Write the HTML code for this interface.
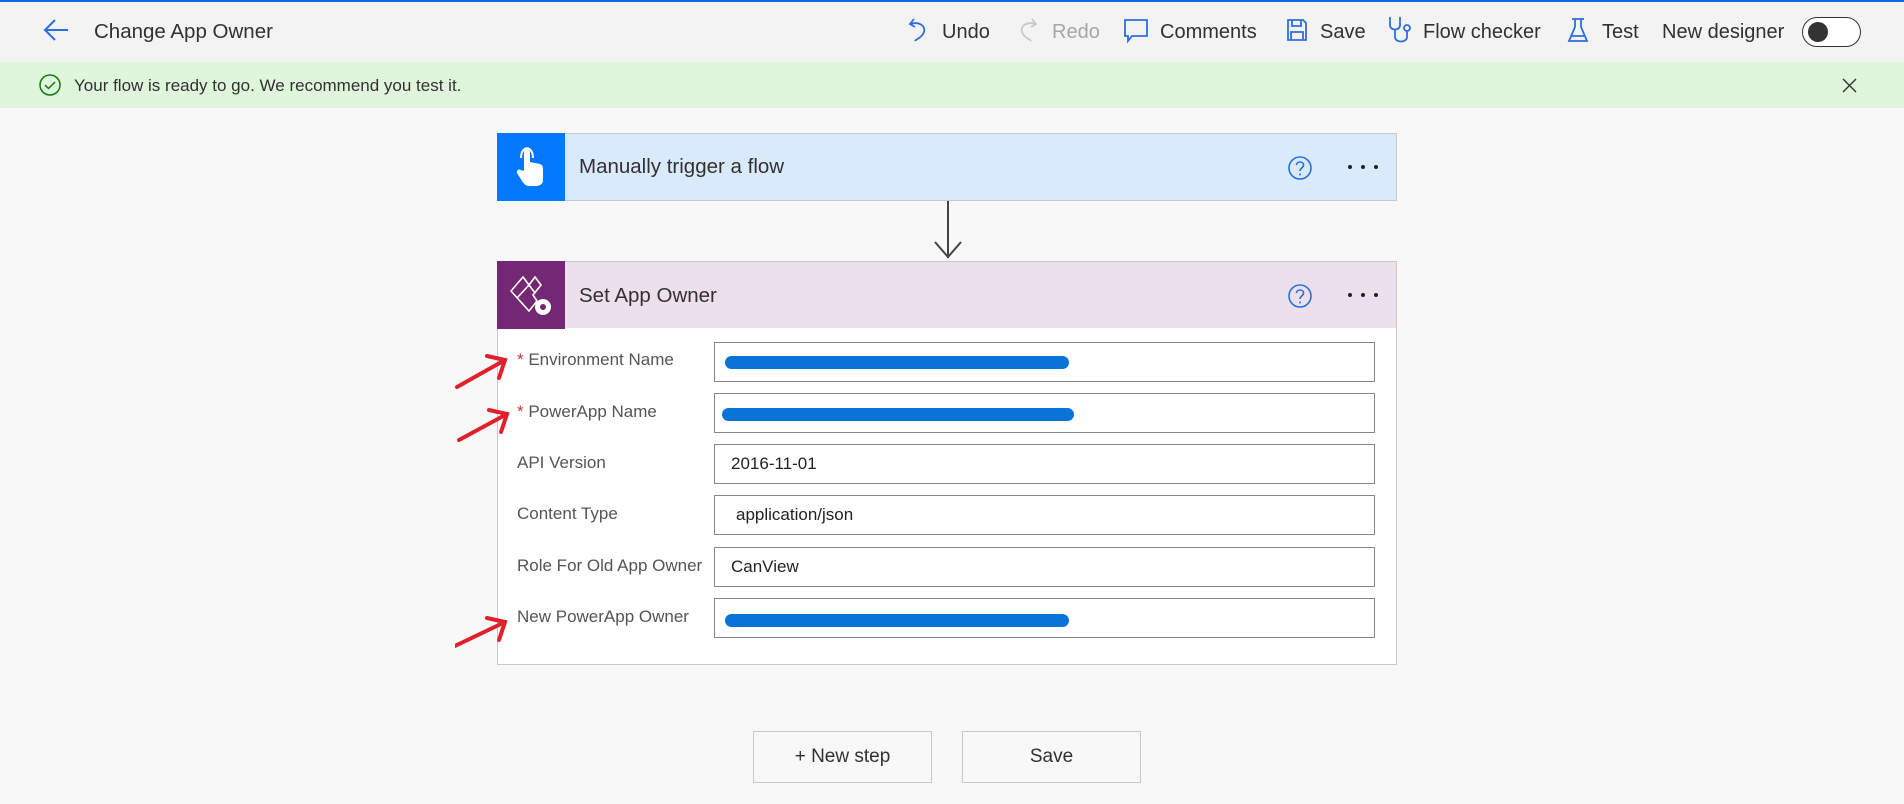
<!DOCTYPE html>
<html><head><meta charset="utf-8"><style>
*{margin:0;padding:0;box-sizing:border-box}
body{width:1904px;height:804px;background:#f8f8f8;font-family:"Liberation Sans",sans-serif;position:relative;overflow:hidden;color:#323130}
.a{position:absolute}
.hdr{left:0;top:0;width:1904px;height:62px;background:#f3f3f3;border-top:2px solid #0f6cdb}
.t{font-size:20px;white-space:nowrap}
.lbl{font-size:17px;color:#555;left:517px;white-space:nowrap}
.inp{left:714px;width:661px;height:40px;border:1px solid #8a8886;background:#fff;font-size:17px;padding:9px 0 0 16px;color:#222}
.scr{height:13px;background:#0a74d6;border-radius:7px}
.btn{top:731px;height:52px;width:179px;border:1px solid #c8c8c8;background:#f8f8f8;font-size:19px;text-align:center;line-height:50px;color:#323130}
.dots{width:32px;height:6px}
</style></head><body>
<div class="a hdr"></div>
<svg class="a" style="left:42px;top:18px" width="28" height="24" viewBox="0 0 28 24"><path d="M13 2 L3 12 L13 22 M3 12 H26" stroke="#2b6ee0" stroke-width="2" fill="none"/></svg>
<div class="a t" style="left:94px;top:20px;font-size:20.5px">Change App Owner</div>
<svg class="a" style="left:907px;top:17px" width="22" height="26" viewBox="0 0 22 26"><path d="M7 2 L3 7 L8 10 M3 7 C12 4 19 9 17 15 C15 21 9 22 8 24" stroke="#2b6ee0" stroke-width="1.8" fill="none"/></svg>
<div class="a t" style="left:942px;top:21px">Undo</div>
<svg class="a" style="left:1017px;top:17px" width="22" height="26" viewBox="0 0 22 26"><path d="M15 2 L19 7 L14 10 M19 7 C10 4 3 9 5 15 C7 21 13 22 14 24" stroke="#c8c8c8" stroke-width="1.8" fill="none"/></svg>
<div class="a t" style="left:1052px;top:21px;color:#a6a6a6">Redo</div>
<svg class="a" style="left:1123px;top:18px" width="26" height="26" viewBox="0 0 26 26"><path d="M2 2 H24 V18 H9 L5 23 V18 H2 Z" stroke="#2b6ee0" stroke-width="1.8" fill="none"/></svg>
<div class="a t" style="left:1160px;top:21px">Comments</div>
<svg class="a" style="left:1286px;top:18px" width="22" height="24" viewBox="0 0 22 24"><path d="M2 2 H17 L20 5 V22 H2 Z M6 2 V8 H15 V2 M5 22 V14 H17 V22" stroke="#2b6ee0" stroke-width="1.8" fill="none"/></svg>
<div class="a t" style="left:1320px;top:21px">Save</div>
<svg class="a" style="left:1387px;top:15px" width="26" height="30" viewBox="0 0 26 30"><path d="M3 2 V10 C3 16 13 16 13 10 V2 M8 15 V22 C8 28 20 28 20 22 V16" stroke="#2b6ee0" stroke-width="1.8" fill="none"/><circle cx="20" cy="13" r="3" stroke="#2b6ee0" stroke-width="1.8" fill="none"/></svg>
<div class="a t" style="left:1423px;top:21px">Flow checker</div>
<svg class="a" style="left:1567px;top:17px" width="22" height="28" viewBox="0 0 22 28"><path d="M5 2 H17 M8 2 V10 L2 24 H20 L14 10 V2 M4 19 H18" stroke="#2b6ee0" stroke-width="1.8" fill="none"/></svg>
<div class="a t" style="left:1602px;top:21px">Test</div>
<div class="a t" style="left:1662px;top:21px">New designer</div>
<div class="a" style="left:1802px;top:17px;width:59px;height:30px;border:1.5px solid #333;border-radius:15px;background:#fff"></div>
<div class="a" style="left:1808px;top:22px;width:20px;height:20px;border-radius:50%;background:#333"></div>
<div class="a" style="left:0;top:62px;width:1904px;height:46px;background:#dff6dd"></div>
<svg class="a" style="left:38px;top:73px" width="24" height="24" viewBox="0 0 24 24"><circle cx="12" cy="12" r="10" stroke="#107c10" stroke-width="1.5" fill="none"/><path d="M7 12 L10.5 15.5 L17 9" stroke="#107c10" stroke-width="1.5" fill="none"/></svg>
<div class="a" style="left:74px;top:76px;font-size:17px;white-space:nowrap">Your flow is ready to go. We recommend you test it.</div>
<svg class="a" style="left:1842px;top:78px" width="15" height="15" viewBox="0 0 15 15"><path d="M1 1 L14 14 M14 1 L1 14" stroke="#333" stroke-width="1.4"/></svg>

<div class="a" style="left:497px;top:133px;width:900px;height:68px;background:#d9eafd;border:1px solid #c8c8c8"></div>
<div class="a" style="left:497px;top:133px;width:68px;height:68px;background:#0078ff"></div>
<svg class="a" style="left:512px;top:146px" width="38" height="42" viewBox="0 0 38 42"><path d="M12 24 V6 C12 2 18 2 18 6 V16 L28 18 C31 19 31 22 31 24 V34 C31 38 28 40 24 40 H17 C14 40 12 38 10 35 L5 27 C4 24 8 22 10 25 Z" fill="#fff"/><path d="M9 12 C9 -1 21 -1 21 12" stroke="#fff" stroke-width="2" fill="none"/></svg>
<div class="a" style="left:579px;top:155px;font-size:20.5px">Manually trigger a flow</div>
<svg class="a" style="left:1287px;top:155px" width="26" height="26" viewBox="0 0 26 26"><circle cx="13" cy="13" r="11" stroke="#2b6ee0" stroke-width="1.6" fill="none"/><path d="M9.5 10 C9.5 6 16.5 6 16.5 10 C16.5 13 13 13 13 16" stroke="#2b6ee0" stroke-width="1.6" fill="none"/><circle cx="13" cy="19.5" r="1" fill="#2b6ee0"/></svg>
<svg class="a dots" style="left:1347px;top:164px" viewBox="0 0 32 6"><circle cx="3" cy="3" r="2" fill="#222"/><circle cx="16" cy="3" r="2" fill="#222"/><circle cx="29" cy="3" r="2" fill="#222"/></svg>

<div class="a" style="left:947px;top:201px;width:2px;height:57px;background:#444"></div>
<svg class="a" style="left:933px;top:238px" width="30" height="22" viewBox="0 0 30 22"><path d="M2 4 L15 19 L28 4" stroke="#444" stroke-width="2" fill="none"/></svg>

<div class="a" style="left:497px;top:261px;width:900px;height:404px;background:#fff;border:1px solid #c8c8c8"></div>
<div class="a" style="left:498px;top:262px;width:898px;height:66px;background:#ebe0ec"></div>
<div class="a" style="left:497px;top:261px;width:68px;height:68px;background:#742774"></div>
<svg class="a" style="left:507px;top:271px" width="48" height="48" viewBox="0 0 48 48"><path d="M4 20 L16 6 L22 14 L28 6 L34 14 L26 24 L30 30 L22 40 L4 20 Z M16 6 L28 22 M10 27 L22 14" stroke="#fff" stroke-width="1.6" fill="none"/><circle cx="36" cy="36" r="8" fill="#fff"/><circle cx="36" cy="36" r="3" fill="#742774"/></svg>
<div class="a" style="left:579px;top:284px;font-size:20.5px">Set App Owner</div>
<svg class="a" style="left:1287px;top:283px" width="26" height="26" viewBox="0 0 26 26"><circle cx="13" cy="13" r="11" stroke="#2b6ee0" stroke-width="1.6" fill="none"/><path d="M9.5 10 C9.5 6 16.5 6 16.5 10 C16.5 13 13 13 13 16" stroke="#2b6ee0" stroke-width="1.6" fill="none"/><circle cx="13" cy="19.5" r="1" fill="#2b6ee0"/></svg>
<svg class="a dots" style="left:1347px;top:292px" viewBox="0 0 32 6"><circle cx="3" cy="3" r="2" fill="#222"/><circle cx="16" cy="3" r="2" fill="#222"/><circle cx="29" cy="3" r="2" fill="#222"/></svg>

<div class="a lbl" style="top:350px"><span style="color:#d13438">*</span> Environment Name</div>
<div class="a lbl" style="top:402px"><span style="color:#d13438">*</span> PowerApp Name</div>
<div class="a lbl" style="top:453px">API Version</div>
<div class="a lbl" style="top:504px">Content Type</div>
<div class="a lbl" style="top:556px">Role For Old App Owner</div>
<div class="a lbl" style="top:607px">New PowerApp Owner</div>

<div class="a inp" style="top:342px"></div>
<div class="a inp" style="top:393px"></div>
<div class="a inp" style="top:444px">2016-11-01</div>
<div class="a inp" style="top:495px;padding-left:21px">application/json</div>
<div class="a inp" style="top:547px">CanView</div>
<div class="a inp" style="top:598px"></div>
<div class="a scr" style="left:725px;top:356px;width:344px"></div>
<div class="a scr" style="left:722px;top:408px;width:352px"></div>
<div class="a scr" style="left:725px;top:614px;width:344px"></div>

<svg class="a" style="left:455px;top:350px" width="60" height="300" viewBox="0 0 60 300"><g stroke="#e0202a" stroke-width="4" fill="none" stroke-linecap="round"><path d="M2 37 L50 10 M32 6 L50 10 L44 28"/><path d="M4 90 L52 64 M34 60 L52 64 L46 82"/><path d="M0 296 L50 272 M32 268 L50 272 L44 290"/></g></svg>

<div class="a btn" style="left:753px">+ New step</div>
<div class="a btn" style="left:962px">Save</div>
</body></html>
